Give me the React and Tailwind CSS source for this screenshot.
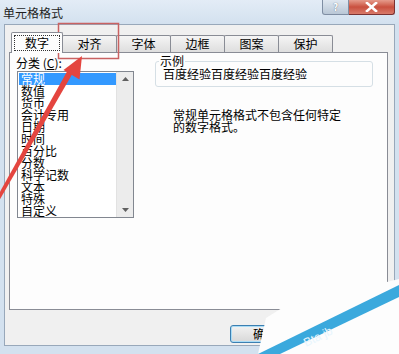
import React from 'react';

const categories = ['常规', '数值', '货币', '会计专用', '日期', '时间', '百分比', '分数', '科学记数', '文本', '特殊', '自定义'];
const tabs = ['对齐', '字体', '边框', '图案', '保护'];

function Overlay() {
  return (
    <svg className="absolute inset-0 pointer-events-none" width="399" height="354" viewBox="0 0 399 354">
      {/* highlight box round the 对齐 tab */}
      <rect x="58.5" y="23.5" width="60" height="35" fill="none" stroke="#c96262" strokeWidth="1.5" />
      {/* arrow */}
      <polygon points="-4,199 -1,201 72.6,73.6 67.6,70.6" fill="#e4453f" />
      <polygon points="82,56 63.5,70 79.5,79.5" fill="#e4453f" />
      {/* watermark corner */}
      <polygon points="282,308 399,279 399,354 258,354 266,318" fill="#fdfdfd" />
      <polygon points="258,354 280,354 399,297 399,285" fill="#3ba9dd" />
      <text x="0" y="0" fill="#e8f6fd" fontSize="12" fontFamily="Liberation Sans, sans-serif" transform="translate(306,347) rotate(-26)">
        Bta     jb
      </text>
    </svg>
  );
}

export default function App() {
  return (
    <div className="relative w-[399px] h-[354px] overflow-hidden bg-[#d3e1ef] text-black text-[12px] leading-[12px] [font-family:'Noto_Sans_CJK_SC','Liberation_Sans',sans-serif]">
      {/* title bar */}
      <div className="h-[24px] flex items-start bg-gradient-to-b from-[#e3ecf6] to-[#d3e1ef]">
        <span className="self-center pl-[3px] pt-[1px] text-[12px] text-[#1e1e1e]">单元格格式</span>
        <div className="ml-auto mr-[4px] flex">
          <div className="w-[27px] h-[15px] flex items-center justify-center rounded-bl-[3px] border border-t-0 border-[#7f8ea3] bg-gradient-to-b from-[#dfe7f0] to-[#b9c7d6] text-[10px] font-bold text-white [text-shadow:0_0_1px_#44546a]">?</div>
          <div className="w-[46px] h-[15px] flex items-center justify-center rounded-br-[3px] border border-l-0 border-t-0 border-[#7a3232] bg-gradient-to-b from-[#e59b8c] via-[#c9503f] to-[#d87a6a]">
            <svg width="13" height="10" viewBox="0 0 13 10">
              <path d="M2 1 L11 9 M11 1 L2 9" stroke="#ffffff" strokeWidth="2.6" strokeLinecap="square" />
            </svg>
          </div>
        </div>
      </div>

      {/* dialog body */}
      <div className="mx-[4px] h-[322px] bg-[#f0f0f0] border border-[#98a8ba] flex flex-col">
        {/* tab strip */}
        <div className="h-[27px] flex items-end pl-[6px] mr-[6px]">
          <div className="relative z-10 -mb-px w-[52px] h-[21px] bg-[#fdfdfd] border border-b-0 border-[#898c95] rounded-t-[2px] flex items-center justify-center">
            <span className="border border-dotted border-[#333] px-[10px] py-[1px]">数字</span>
          </div>
          {tabs.map((t) => (
            <div
              key={t}
              className="-ml-px w-[55px] h-[17px] border border-b-0 border-[#898c95] rounded-t-[2px] bg-gradient-to-b from-[#f5f5f5] to-[#dedede] flex items-center justify-center"
            >
              {t}
            </div>
          ))}
        </div>

        {/* tab page */}
        <div className="ml-[4px] mr-[6px] h-[258px] bg-[#fdfdfd] border border-[#898c95] flex">
          <div className="pl-[6px] pt-[4px] flex flex-col">
            <span>分类 (<u>C</u>):</span>
            <div className="mt-[2px] ml-[1px] w-[117px] h-[147px] border border-[#828790] bg-white flex">
              <ul className="flex-1 pt-[1px] pl-px">
                {categories.map((c, i) => (
                  <li
                    key={c}
                    className={i === 0 ? 'h-[12px] px-[2px] bg-[#3399ff] text-white' : 'h-[12px] px-[2px]'}
                  >
                    {c}
                  </li>
                ))}
              </ul>
              <div className="w-[17px] bg-[#ececec] border-l border-[#e2e2e2] flex flex-col items-center justify-between py-[5px]">
                <svg width="7" height="4" viewBox="0 0 7 4"><path d="M0 4 L3.5 0 L7 4 Z" fill="#606060" /></svg>
                <svg width="7" height="4" viewBox="0 0 7 4"><path d="M0 0 L3.5 4 L7 0 Z" fill="#606060" /></svg>
              </div>
            </div>
          </div>

          <div className="ml-[21px] pt-[2px] flex flex-col">
            <fieldset className="w-[218px] border border-[#d5dfe5] rounded-[3px] pb-[6px]">
              <legend className="ml-[3px] px-[1px]">示例</legend>
              <div className="pt-[1px] pl-[7px]">百度经验百度经验百度经验</div>
            </fieldset>
            <p className="mt-[22px] ml-[18px]">
              常规单元格格式不包含任何特定
              <br />
              的数字格式。
            </p>
          </div>
        </div>

        {/* button row */}
        <div className="mt-[15px] ml-[225px]">
          <button className="w-[75px] h-[18px] rounded-[3px] border border-[#3c7fb1] bg-gradient-to-b from-[#f2f2f2] to-[#d8d8d8] shadow-[inset_0_0_0_1px_#a9dcf6] pl-[22px] text-left">
            确定
          </button>
        </div>
      </div>

      <Overlay />
    </div>
  );
}
